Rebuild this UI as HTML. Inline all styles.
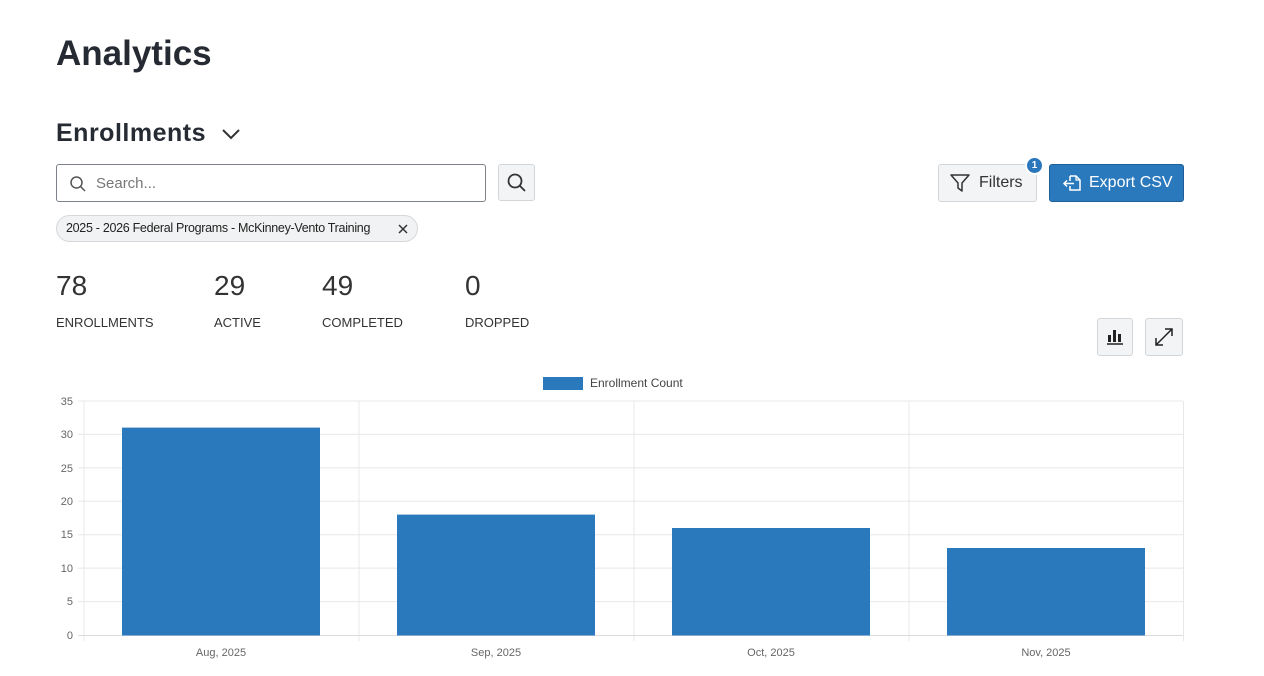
<!DOCTYPE html>
<html><head><meta charset="utf-8"><style>
*{box-sizing:border-box;margin:0;padding:0}
body{width:1264px;height:676px;background:#fff;font-family:"Liberation Sans",sans-serif;color:#2b2b2b;position:relative;overflow:hidden}
.a{position:absolute}
.btn{position:absolute;border:1px solid #d3d6d9;background:#f3f4f5;border-radius:3px}
</style></head><body>
<div class="a" style="left:56px;top:34px;font-size:35px;font-weight:bold;color:#262b33;letter-spacing:0">Analytics</div>
<div class="a" style="left:56px;top:119px;font-size:25px;font-weight:bold;color:#262b33;letter-spacing:0.5px">Enrollments</div>
<svg class="a" style="left:221px;top:127px" width="20" height="14"><path d="M2 3 L10 11 L18 3" stroke="#333" stroke-width="2" fill="none"/></svg>

<div class="a" style="left:56px;top:164px;width:430px;height:38px;border:1px solid #7d8288;border-radius:3px"></div>
<svg class="a" style="left:69px;top:175px" width="18" height="18"><circle cx="7.5" cy="7.5" r="5.5" stroke="#555" stroke-width="1.5" fill="none"/><path d="M11.5 11.5 L16 16" stroke="#555" stroke-width="1.5"/></svg>
<div class="a" style="left:96px;top:175px;font-size:15px;color:#777">Search...</div>
<div class="btn" style="left:498px;top:164px;width:37px;height:37px"></div>
<svg class="a" style="left:506px;top:172px" width="22" height="22"><circle cx="9" cy="9" r="6.5" stroke="#333" stroke-width="1.8" fill="none"/><path d="M13.8 13.8 L19 19" stroke="#333" stroke-width="1.8"/></svg>

<div class="a" style="left:56px;top:215px;width:362px;height:27px;border:1px solid #d5d7da;background:#f1f2f3;border-radius:14px;font-size:12.5px;line-height:25px;padding-left:9px;color:#222;letter-spacing:-0.3px">2025 - 2026 Federal Programs - McKinney-Vento Training</div>
<svg class="a" style="left:397px;top:223px" width="12" height="12"><path d="M2 2 L10 10 M10 2 L2 10" stroke="#333" stroke-width="1.5"/></svg>

<div class="btn" style="left:938px;top:164px;width:99px;height:38px"></div>
<svg class="a" style="left:949px;top:172px" width="22" height="22"><path d="M2 3 H20 L13 11 V19 L9 16 V11 Z" stroke="#333" stroke-width="1.5" fill="none" stroke-linejoin="round"/></svg>
<div class="a" style="left:979px;top:174px;font-size:16px;color:#333">Filters</div>
<div class="a" style="left:1025px;top:156px;width:19px;height:19px;border-radius:50%;background:#2a78bb;border:2px solid #fff;color:#fff;font-size:10px;font-weight:bold;text-align:center;line-height:15px">1</div>
<div class="a" style="left:1049px;top:164px;width:135px;height:38px;background:#2b79bd;border:1px solid #1f5f99;border-radius:3px"></div>
<svg class="a" style="left:1061px;top:172px" width="22" height="22"><path d="M9 4 H15 L19 8 V18 H9 V14 M9 4 V9" stroke="#fff" stroke-width="1.5" fill="none"/><path d="M15 4 V8 H19" stroke="#fff" stroke-width="1.2" fill="none"/><path d="M13 11.5 H3 M6 8.5 L3 11.5 L6 14.5" stroke="#fff" stroke-width="1.5" fill="none"/></svg>
<div class="a" style="left:1089px;top:174px;font-size:16px;color:#fff">Export CSV</div>

<div class="a" style="left:56px;top:270px;font-size:28px;color:#333">78</div>
<div class="a" style="left:214px;top:270px;font-size:28px;color:#333">29</div>
<div class="a" style="left:322px;top:270px;font-size:28px;color:#333">49</div>
<div class="a" style="left:465px;top:270px;font-size:28px;color:#333">0</div>
<div class="a" style="left:56px;top:315px;font-size:13px;color:#333">ENROLLMENTS</div>
<div class="a" style="left:214px;top:315px;font-size:13px;color:#333">ACTIVE</div>
<div class="a" style="left:322px;top:315px;font-size:13px;color:#333">COMPLETED</div>
<div class="a" style="left:465px;top:315px;font-size:13px;color:#333">DROPPED</div>

<div class="btn" style="left:1097px;top:318px;width:36px;height:38px"></div>
<svg class="a" style="left:1104px;top:326px" width="22" height="22"><rect x="4" y="9" width="3" height="7" fill="#222"/><rect x="9" y="4" width="3" height="12" fill="#222"/><rect x="14" y="8" width="3" height="8" fill="#222"/><path d="M3 18 H19" stroke="#222" stroke-width="1.5"/></svg>
<div class="btn" style="left:1145px;top:318px;width:38px;height:38px"></div>
<svg class="a" style="left:1153px;top:326px" width="22" height="22"><path d="M3 19 L19 3 M12 3 H19 V10 M3 12 V19 H10" stroke="#222" stroke-width="1.5" fill="none"/></svg>

<svg class="a" style="left:0;top:370px" width="1264" height="306" font-family="Liberation Sans, sans-serif">
<rect x="543" y="7" width="40" height="13" fill="#2b79bd"/>
<text x="590" y="17" font-size="12" fill="#444">Enrollment Count</text>
<g stroke="#e8e8e8" stroke-width="1">
<path d="M78 31 H1183 M78 64.4 H1183 M78 97.9 H1183 M78 131.3 H1183 M78 164.7 H1183 M78 198.1 H1183 M78 231.6 H1183"/>
<path d="M84 31 V271 M359 31 V271 M634 31 V271 M909 31 V271 M1183.5 31 V271"/>
</g>
<path d="M78 265.5 H1183" stroke="#dcdcdc"/>
<g font-size="11" fill="#666" text-anchor="end">
<text x="73" y="35">35</text><text x="73" y="68">30</text><text x="73" y="102">25</text><text x="73" y="135">20</text><text x="73" y="168">15</text><text x="73" y="202">10</text><text x="73" y="235">5</text><text x="73" y="269">0</text>
</g>
<g fill="#2b79bd">
<rect x="122" y="57.6" width="198" height="207.9"/>
<rect x="397" y="144.6" width="198" height="120.9"/>
<rect x="672" y="158" width="198" height="107.5"/>
<rect x="947" y="178" width="198" height="87.5"/>
</g>
<g font-size="11" fill="#666" text-anchor="middle">
<text x="221" y="286">Aug, 2025</text><text x="496" y="286">Sep, 2025</text><text x="771" y="286">Oct, 2025</text><text x="1046" y="286">Nov, 2025</text>
</g>
</svg>
</body></html>
